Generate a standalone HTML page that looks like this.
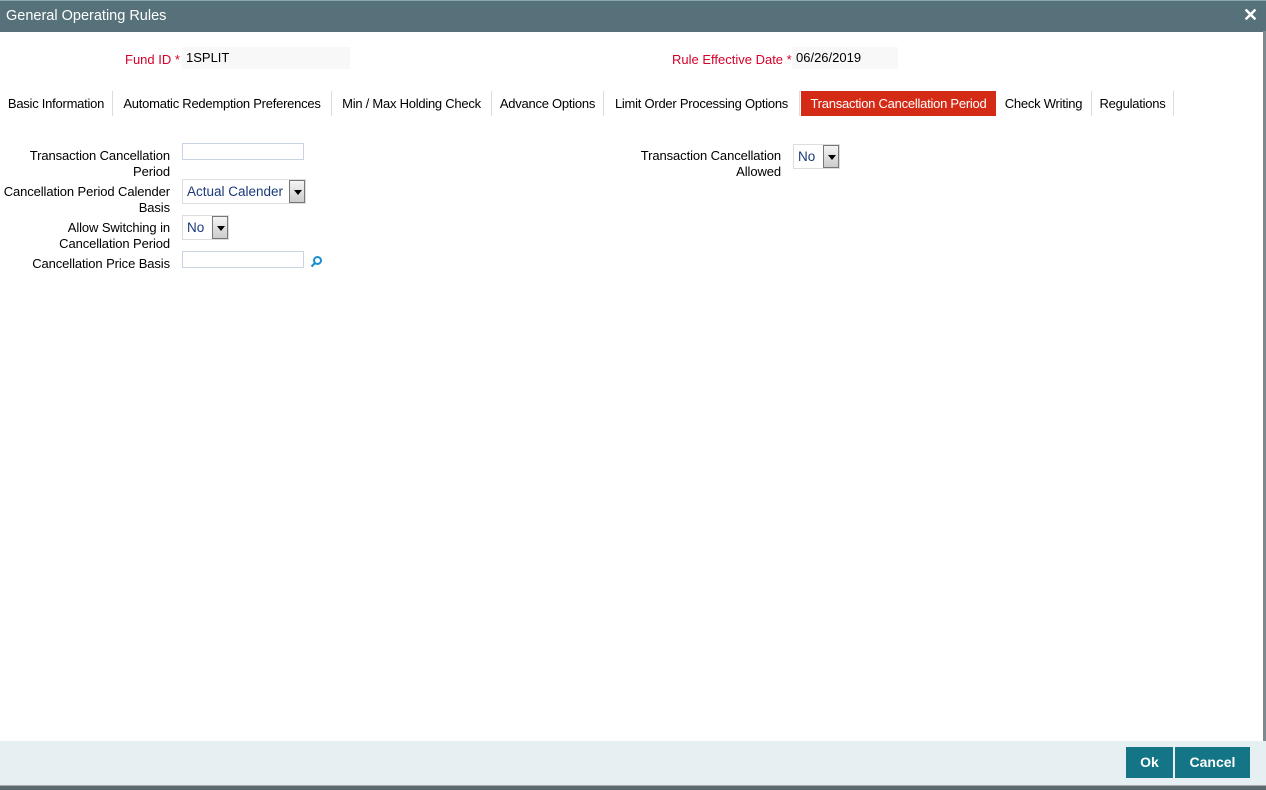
<!DOCTYPE html>
<html><head><style>
body{margin:0;width:1266px;height:789px;position:relative;overflow:hidden;background:#fff;font-family:"Liberation Sans",Arial,sans-serif;font-size:13px;color:#000}
.a{position:absolute}
.hdr{left:0;top:0;width:1266px;height:31px;background:#56717a;border-top:1px solid #8aa}
.lbl{text-align:right;line-height:16px;letter-spacing:-0.1px}
.red{color:#d4002a}
.inp{background:#fff;border:1px solid #c8d4e4;box-sizing:border-box}
.ro{background:#f8f8f8}
.tab{top:91px;height:25px;line-height:26px;font-size:13px;letter-spacing:-0.25px;border-right:1px solid #ddd;white-space:nowrap;text-align:center;box-sizing:border-box;overflow:visible}
.sel{border:1px solid #ddd;box-sizing:border-box;height:25px;background:#fff;color:#1a3a7a;font-size:13.5px;line-height:23px;padding-left:4px}
.arr{position:absolute;right:0;top:0;width:16px;height:23px;background:linear-gradient(#f4f4f4,#ccc);border:1px solid #777;box-sizing:border-box}
.arr:after{content:"";position:absolute;left:4px;top:9px;border-left:4px solid transparent;border-right:4px solid transparent;border-top:5px solid #000}
.btn{top:747px;height:31px;background:#137585;color:#fff;font-weight:bold;font-size:14px;line-height:31px;text-align:center}
</style></head><body>
<div class="a hdr"></div>
<div class="a" style="left:6px;top:8px;color:#fff;font-size:14.5px">General Operating Rules</div>
<div class="a" style="left:1243px;top:5px;color:#fff;font-size:18px;font-weight:bold">✕</div>
<div class="a" style="left:1263px;top:31px;width:3px;height:710px;background:#7d8a90"></div>

<div class="a red" style="left:125px;top:52px">Fund ID <span>*</span></div>
<div class="a ro" style="left:182px;top:47px;width:168px;height:22px;line-height:22px;padding-left:4px;box-sizing:border-box">1SPLIT</div>
<div class="a red" style="left:672px;top:52px">Rule Effective Date <span>*</span></div>
<div class="a ro" style="left:792px;top:47px;width:106px;height:22px;line-height:22px;padding-left:4px;box-sizing:border-box">06/26/2019</div>

<div class="a tab" style="left:0px;width:113px">Basic Information</div>
<div class="a tab" style="left:113px;width:219px">Automatic Redemption Preferences</div>
<div class="a tab" style="left:332px;width:160px">Min / Max Holding Check</div>
<div class="a tab" style="left:492px;width:112px">Advance Options</div>
<div class="a tab" style="left:604px;width:196px">Limit Order Processing Options</div>
<div class="a tab" style="left:801px;background:#d42b16;color:#fff;width:195px;border:none">Transaction Cancellation Period</div>
<div class="a tab" style="left:996px;width:96px">Check Writing</div>
<div class="a tab" style="left:1092px;width:82px">Regulations</div>

<div class="a lbl" style="left:0;width:170px;top:148px">Transaction Cancellation<br>Period</div>
<div class="a inp" style="left:182px;top:143px;width:122px;height:17px"></div>
<div class="a lbl" style="left:0;width:170px;top:184px">Cancellation Period Calender<br>Basis</div>
<div class="a sel" style="left:182px;top:179px;width:124px">Actual Calender<div class="arr"></div></div>
<div class="a lbl" style="left:0;width:170px;top:220px">Allow Switching in<br>Cancellation Period</div>
<div class="a sel" style="left:182px;top:215px;width:47px">No<div class="arr"></div></div>
<div class="a lbl" style="left:0;width:170px;top:256px">Cancellation Price Basis</div>
<div class="a inp" style="left:182px;top:251px;width:122px;height:17px"></div>
<svg class="a" style="left:310px;top:255px" width="13" height="13" viewBox="0 0 13 13"><circle cx="7.5" cy="5.5" r="3.5" fill="none" stroke="#1a8fd0" stroke-width="2"/><path d="M5 8L1.5 11.5" stroke="#1a8fd0" stroke-width="2.2"/></svg>

<div class="a lbl" style="left:600px;width:181px;top:148px">Transaction Cancellation<br>Allowed</div>
<div class="a sel" style="left:793px;top:144px;width:47px">No<div class="arr"></div></div>

<div class="a" style="left:0;top:741px;width:1266px;height:44px;background:#e6f0f3"></div>
<div class="a btn" style="left:1126px;width:47px">Ok</div>
<div class="a btn" style="left:1175px;width:75px">Cancel</div>
<div class="a" style="left:0;top:785px;width:1266px;height:4px;background:#5c6a70;border-top:1px solid #aaa"></div>
</body></html>
